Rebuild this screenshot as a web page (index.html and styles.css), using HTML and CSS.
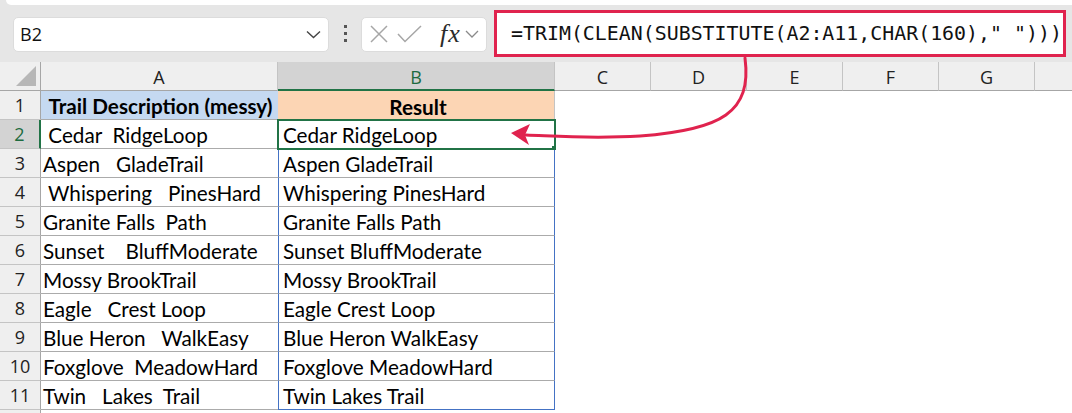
FILE: index.html
```html
<!DOCTYPE html>
<html>
<head>
<meta charset="utf-8">
<link rel="stylesheet" href="styles.css">
</head>
<body>
<div class="app">
  <div class="ribbon-edge"></div>
  <div class="toolbar">
    <div class="namebox">
      <span class="ref">B2</span>
      <svg class="chev" width="15" height="9" viewBox="0 0 15 9"><path d="M1 1.5 L7.5 7.5 L14 1.5" fill="none" stroke="#444" stroke-width="1.4"/></svg>
    </div>
    <div class="dots"><i></i><i></i><i></i></div>
    <div class="fxbox">
      <svg width="18" height="18" viewBox="0 0 18 18"><path d="M1 1 L17 17 M17 1 L1 17" stroke="#a6a6a6" stroke-width="1.5" fill="none"/></svg>
      <svg width="25" height="18" viewBox="0 0 25 18"><path d="M1 9 L8 16.5 L24 1" stroke="#a6a6a6" stroke-width="1.5" fill="none"/></svg>
      <span class="fx">fx</span>
      <svg width="14" height="8" viewBox="0 0 14 8"><path d="M1 1 L7 7 L13 1" fill="none" stroke="#8a8a8a" stroke-width="1.3"/></svg>
    </div>
    <div class="formula">=TRIM(CLEAN(SUBSTITUTE(A2:A11,CHAR(160)," ")))</div>
  </div>
  <div class="sheet">
    <div class="ch corner"><span class="tri"></span></div>
    <div class="ch">A</div>
    <div class="ch sel">B</div>
    <div class="ch">C</div>
    <div class="ch">D</div>
    <div class="ch">E</div>
    <div class="ch">F</div>
    <div class="ch">G</div>
    <div class="ch last"></div>

    <div class="rh">1</div>
    <div class="c a head-a">Trail Description (messy)</div>
    <div class="c b head-b">Result</div>
    <div class="c e span7"></div>

    <div class="rh sel">2</div>
    <div class="c a">&nbsp;Cedar&nbsp;&nbsp;RidgeLoop</div>
    <div class="c b active">Cedar RidgeLoop</div>
    <div class="c e span7"></div>

    <div class="rh">3</div>
    <div class="c a">Aspen&nbsp;&nbsp;&nbsp;GladeTrail</div>
    <div class="c b">Aspen GladeTrail</div>
    <div class="c e span7"></div>

    <div class="rh">4</div>
    <div class="c a">&nbsp;Whispering&nbsp;&nbsp;&nbsp;PinesHard</div>
    <div class="c b">Whispering PinesHard</div>
    <div class="c e span7"></div>

    <div class="rh">5</div>
    <div class="c a">Granite Falls&nbsp;&nbsp;Path</div>
    <div class="c b">Granite Falls Path</div>
    <div class="c e span7"></div>

    <div class="rh">6</div>
    <div class="c a">Sunset&nbsp;&nbsp;&nbsp;&nbsp;BluffModerate</div>
    <div class="c b">Sunset BluffModerate</div>
    <div class="c e span7"></div>

    <div class="rh">7</div>
    <div class="c a">Mossy BrookTrail</div>
    <div class="c b">Mossy BrookTrail</div>
    <div class="c e span7"></div>

    <div class="rh">8</div>
    <div class="c a">Eagle&nbsp;&nbsp;&nbsp;Crest Loop</div>
    <div class="c b">Eagle Crest Loop</div>
    <div class="c e span7"></div>

    <div class="rh">9</div>
    <div class="c a">Blue Heron&nbsp;&nbsp;&nbsp;WalkEasy</div>
    <div class="c b">Blue Heron WalkEasy</div>
    <div class="c e span7"></div>

    <div class="rh">10</div>
    <div class="c a">Foxglove&nbsp;&nbsp;MeadowHard</div>
    <div class="c b">Foxglove MeadowHard</div>
    <div class="c e span7"></div>

    <div class="rh">11</div>
    <div class="c a">Twin&nbsp;&nbsp;&nbsp;Lakes&nbsp;&nbsp;Trail</div>
    <div class="c b lastb">Twin Lakes Trail</div>
    <div class="c e span7"></div>

    <div class="rh"></div>
    <div class="c a"></div>
    <div class="c e"></div>
    <div class="c e span7"></div>
  </div>
  <svg class="arrow" width="1072" height="413" viewBox="0 0 1072 413">
    <path d="M745 58 C 752 112, 722 130, 640 136 C 590 139, 555 136, 526 135" fill="none" stroke="#e0234e" stroke-width="3" stroke-linecap="round"/>
    <path d="M511 133 L530 124 L525 135 L529 145 Z" fill="#e0234e"/>
  </svg>
</div>
</body>
</html>
```

FILE: styles.css
```css
html, body {
  margin: 0;
  padding: 0;
  width: 1072px;
  height: 413px;
  overflow: hidden;
  background: #ffffff;
}

.app {
  position: relative;
  width: 1072px;
  height: 413px;
  overflow: hidden;
  background: #e6e6e6;
  font-family: "Open Sans", "Segoe UI", sans-serif;
}

.ribbon-edge {
  height: 5px;
  margin-left: 6px;
  background: #ffffff;
  border-bottom-left-radius: 6px;
}

.toolbar {
  height: 57px;
  display: flex;
  align-items: center;
  padding-left: 13px;
  box-sizing: border-box;
}

.namebox {
  width: 316px;
  height: 35px;
  box-sizing: border-box;
  background: #ffffff;
  border: 1px solid #dcdcdc;
  border-radius: 5px;
  display: flex;
  align-items: center;
  justify-content: space-between;
  padding: 0 7px 0 6px;
  margin-top: 1px;
}

.namebox .ref {
  font-size: 18px;
  color: #111;
}

.dots {
  width: 32px;
  display: flex;
  flex-direction: column;
  align-items: center;
  gap: 4px;
}

.dots i {
  display: block;
  width: 3px;
  height: 3px;
  background: #555;
}

.fxbox {
  width: 126px;
  height: 35px;
  box-sizing: border-box;
  background: #ffffff;
  border: 1px solid #dcdcdc;
  border-radius: 5px;
  display: flex;
  align-items: center;
  padding-left: 8px;
  gap: 9px;
  margin-top: 1px;
}

.fxbox .fx {
  font-family: "Liberation Serif", "DejaVu Serif", serif;
  font-style: italic;
  font-size: 26px;
  color: #2b2b2b;
  margin-left: 9px;
  margin-right: -5px;
  line-height: 1;
  letter-spacing: 1px;
}

.formula {
  margin-left: 7px;
  width: 572px;
  height: 47px;
  box-sizing: border-box;
  border: 3px solid #e0234e;
  background: #ffffff;
  font-family: "DejaVu Sans Mono", "Liberation Mono", monospace;
  font-size: 19.9px;
  color: #111;
  display: flex;
  align-items: center;
  padding-left: 14px;
  white-space: pre;
  margin-bottom: 1px;
}

.sheet {
  display: grid;
  grid-template-columns: 41px 237px 277px 96px 96px 96px 96px 96px 1fr;
  grid-auto-rows: 29px;
  background: #ffffff;
}

.ch {
  background: #efefef;
  border-right: 1px solid #c4c4c4;
  border-bottom: 1px solid #a6a6a6;
  box-sizing: border-box;
  display: flex;
  align-items: center;
  justify-content: center;
  font-size: 18px;
  color: #222;
  padding-top: 1px;
}

.ch.sel {
  background: #d3d3d3;
  color: #1d6b40;
  border-bottom: 2px solid #217346;
  padding-top: 2px;
}

.ch.last {
  border-right: none;
}

.corner {
  position: relative;
  border-right: 1px solid #a6a6a6;
}

.corner .tri {
  position: absolute;
  right: 4px;
  bottom: 4px;
  width: 0;
  height: 0;
  border-left: 20px solid transparent;
  border-bottom: 20px solid #b7b7b7;
}

.rh {
  background: #efefef;
  border-right: 1px solid #a6a6a6;
  border-bottom: 1px solid #c4c4c4;
  box-sizing: border-box;
  display: flex;
  align-items: flex-end;
  justify-content: center;
  font-size: 18px;
  color: #222;
  padding-bottom: 1px;
  line-height: 25px;
}

.rh.sel {
  background: #d3d3d3;
  color: #1d6b40;
  border-right: 2px solid #217346;
}

.c {
  box-sizing: border-box;
  font-family: "Lato", "Liberation Sans", sans-serif;
  font-size: 20.7px;
  color: #000;
  white-space: pre;
  display: flex;
  align-items: flex-end;
  line-height: 25px;
  padding: 0 0 0 2px;
  overflow: hidden;
}

.c.a {
  border-bottom: 1px solid #ababab;
}

.c.b {
  border-left: 1px solid #4472c4;
  border-right: 1px solid #4472c4;
  border-bottom: 1px solid #ababab;
  padding-left: 4px;
}

.c.b.lastb {
  border-bottom: 1px solid #4472c4;
}

.c.e {
  background: #ffffff;
}

.span7 {
  grid-column: span 6;
}

.head-a {
  background: #c5d9f1;
  font-weight: bold;
  justify-content: center;
}

.head-b.b {
  background: #fcd5b4;
  font-weight: bold;
  justify-content: center;
  border-left: none;
  border-right: 1px solid #c4c4c4;
  border-bottom: none;
}

.active {
  position: relative;
  z-index: 1;
  outline: 2px solid #217346;
  outline-offset: -1px;
}

.active::after {
  content: "";
  position: absolute;
  right: -4px;
  bottom: -4px;
  width: 5px;
  height: 5px;
  background: #217346;
  border: 1px solid #ffffff;
}

.arrow {
  position: absolute;
  left: 0;
  top: 0;
  pointer-events: none;
  z-index: 5;
}
```
